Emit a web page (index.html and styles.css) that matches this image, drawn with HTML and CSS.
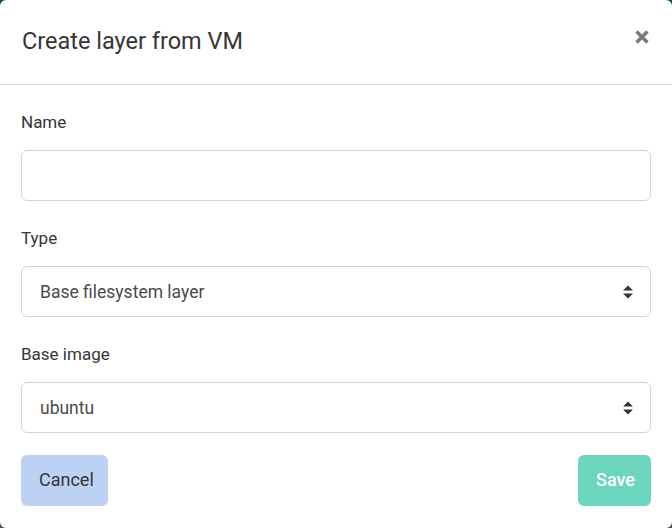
FILE: index.html
```html
<!DOCTYPE html>
<html>
<head>
<meta charset="utf-8">
<link rel="stylesheet" href="styles.css">
</head>
<body>
<div class="modal">
  <header class="modal-head">
    <h1 class="modal-title">Create layer from VM</h1>
    <button class="close" aria-label="close">
      <svg width="16" height="16" viewBox="0 0 16 16"><path d="M2.5 2.5 L13.5 13.5 M13.5 2.5 L2.5 13.5" stroke="#7a7a7a" stroke-width="3.4" stroke-linecap="butt"/></svg>
    </button>
  </header>
  <section class="modal-body">
    <div class="field">
      <label class="label">Name</label>
      <div class="input"></div>
    </div>
    <div class="field">
      <label class="label">Type</label>
      <div class="select"><span>Base filesystem layer</span>
        <svg class="arrows" width="12" height="16" viewBox="0 0 12 16"><path d="M1 6.5 L6 1.5 L11 6.5 Z M1 9.5 L11 9.5 L6 14.5 Z" fill="#363636"/></svg>
      </div>
    </div>
    <div class="field">
      <label class="label">Base image</label>
      <div class="select"><span>ubuntu</span>
        <svg class="arrows" width="12" height="16" viewBox="0 0 12 16"><path d="M1 6.5 L6 1.5 L11 6.5 Z M1 9.5 L11 9.5 L6 14.5 Z" fill="#363636"/></svg>
      </div>
    </div>
    <div class="actions">
      <button class="btn btn-cancel">Cancel</button>
      <button class="btn btn-save">Save</button>
    </div>
  </section>
</div>
</body>
</html>
```
FILE: styles.css
```css
html, body {
  margin: 0;
  padding: 0;
  height: 100%;
}
body {
  background: linear-gradient(to bottom, #0a4d43 0%, #2e4a46 50%, #4a4a4a 100%);
  font-family: Roboto, "Liberation Sans", sans-serif;
  color: #363636;
}
.modal {
  width: 672px;
  height: 528px;
  background: #fff;
  border-radius: 6px;
  box-sizing: border-box;
  display: flex;
  flex-direction: column;
}
.modal-head {
  height: 85px;
  box-sizing: border-box;
  border-bottom: 1px solid #dbdbdb;
  display: flex;
  align-items: center;
  justify-content: space-between;
  padding: 0 22px 0 22px;
}
.modal-title {
  margin: 0;
  font-size: 23.5px;
  font-weight: 400;
  color: #363636;
  line-height: 1;
  padding-bottom: 0;
}
.close {
  border: 0;
  background: none;
  padding: 0;
  width: 16px;
  height: 16px;
  display: flex;
  margin-bottom: 11px;
}
.modal-body {
  padding: 25px 21px 0 21px;
  display: flex;
  flex-direction: column;
}
.field {
  display: flex;
  flex-direction: column;
}
.label {
  font-size: 17px;
  line-height: 24px;
  height: 24px;
  margin-bottom: 16px;
  display: block;
}
.field + .field {
  margin-top: 25px;
}
.input, .select {
  height: 51px;
  box-sizing: border-box;
  border: 1px solid #d4d4d8;
  border-radius: 6px;
  background: #fff;
}
.select {
  display: flex;
  align-items: center;
  justify-content: space-between;
  padding: 0 16px 0 18px;
  font-size: 17.5px;
  color: #4a4a4a;
}
.arrows {
  display: block;
}
.actions {
  display: flex;
  justify-content: space-between;
  margin-top: 22px;
}
.btn {
  height: 51px;
  border: 0;
  border-radius: 6px;
  font-family: Roboto, "Liberation Sans", sans-serif;
  font-size: 18px;
  padding: 0 18px 2px;
}
.btn-cancel {
  background: #bdd1f5;
  color: #363636;
  width: 87px;
}
.btn-save {
  background: #6bd5bd;
  color: #fff;
  font-weight: 500;
  width: 73px;
}
```
